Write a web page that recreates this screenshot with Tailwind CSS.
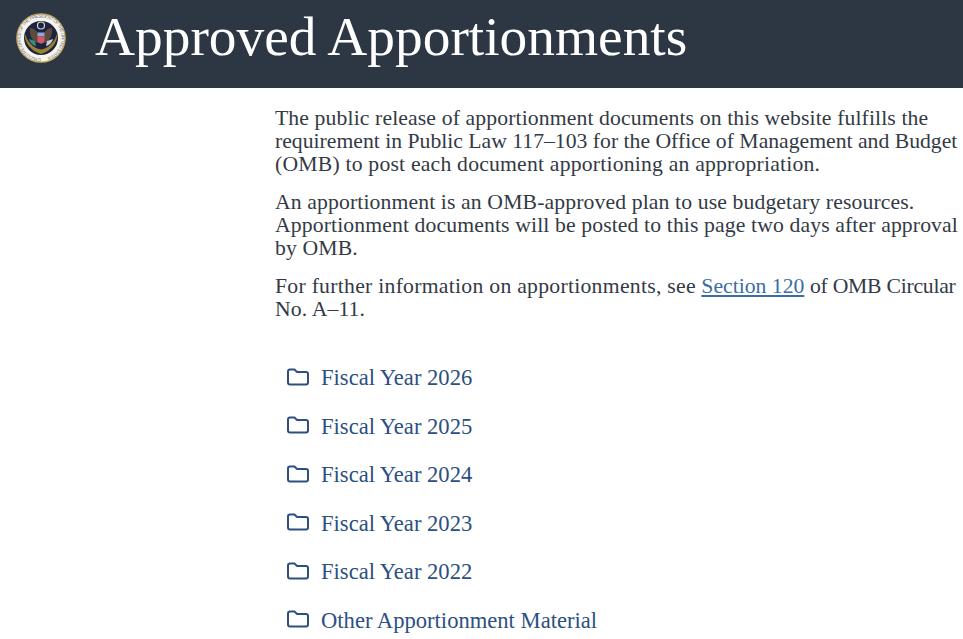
<!DOCTYPE html>
<html lang="en">
<head>
  <meta charset="UTF-8">
  <meta name="viewport" content="width=device-width, initial-scale=1.0">
  <title>Approved Apportionments</title>
  <script src="https://cdn.jsdelivr.net/npm/@tailwindcss/browser@4"></script>
</head>
<body class="bg-white overflow-hidden h-[639px] [font-family:'Liberation_Serif',serif]">
  <header class="bg-[#2d3643] h-[88px] pb-[14px] flex items-center">
    <svg class="ml-[16px] mt-[2px] w-[50px] h-[50px] shrink-0" viewBox="0 0 50 50">
      <circle cx="25" cy="25" r="24.8" fill="#c9ad5a"/>
      <circle cx="25" cy="25" r="23.6" fill="#f6f4ec"/>
      <defs><path id="ring" d="M25 45.500a20.500 20.500 0 1 1 .01 0"/></defs>
      <text font-size="4.600" fill="#6f7280" font-family="Liberation Sans, sans-serif"><textPath href="#ring" textLength="122">EXECUTIVE OFFICE OF THE PRESIDENT OF THE UNITED STATES</textPath></text>
      <circle cx="25" cy="25" r="17" fill="#1b2440"/>
      <path d="M8.500 19c-.5 10 6 19 16.500 22 10.500-3 17-12 16.500-22-2 9-8 16-16.500 17.500C16.500 35 10.500 28 8.500 19z" fill="#9a8230"/>
      <path d="M14 15c4 0 7 3 8 6v9c-5-1-9-7-8-15zM36 15c-4 0-7 3-8 6v9c5-1 9-7 8-15z" fill="#5d4a3c"/>
      <circle cx="25" cy="12.500" r="3.500" fill="none" stroke="#d9d6c4" stroke-width="1.200"/>
      <rect x="21.500" y="19.500" width="7" height="4" fill="#8fa6d8"/>
      <path d="M21.500 23.500h7v4c0 1.800-1.700 2.800-3.500 3.300-1.800-.5-3.500-1.500-3.500-3.300z" fill="#d8566b"/>
      <path d="M13 26l6 2 1 5c-3-.5-6-3-7-7z" fill="#3d8c80"/>
      <path d="M37 26l-6 2-1 5c3-.5 6-3 7-7z" fill="#c9cdd2"/>
    </svg>
    <h1 class="ml-[29px] text-[55.400px] leading-none text-white whitespace-nowrap">Approved Apportionments</h1>
  </header>

  <main class="pl-[275px] pt-[19px] text-[#333a45] text-[21.700px] leading-[23px] tracking-[0.12px] whitespace-nowrap">
    <p>The public release of apportionment documents on this website fulfills the<br>
      <span class="tracking-normal">requirement in Public Law 117–103 for the Office of Management and Budget</span><br>
      <span class="tracking-[0.2px]">(OMB) to post each document apportioning an appropriation.</span></p>
    <p class="mt-[15px]">An apportionment is an OMB-approved plan to use budgetary resources.<br>
      Apportionment documents will be posted to this page two days after approval<br>
      by OMB.</p>
    <p class="mt-[15px]"><span class="tracking-[0.27px]">For further information on apportionments, see</span> <a href="#" class="text-[#3a6ea5] underline tracking-normal">Section 120</a> <span class="tracking-[-0.25px]">of OMB Circular</span><br>
      No. A–11.</p>

    <ul class="mt-[32.600px] text-[#2c5080] text-[22.600px] leading-[25px] tracking-normal">
      <li class="h-[48.500px] flex items-center pl-[12px] gap-[12px]">
        <svg class="w-[22px] h-[18px] -translate-y-px" viewBox="0 0 22 18" fill="none" stroke="#2c5080" stroke-width="2"><path d="M1 3.500c0-1.200.8-2 2-2h4.500l2.500 2.500h9c1.200 0 2 .8 2 2v8.500c0 1.200-.8 2-2 2H3c-1.200 0-2-.8-2-2z"/></svg>
        <span>Fiscal Year 2026</span>
      </li>
      <li class="h-[48.500px] flex items-center pl-[12px] gap-[12px]">
        <svg class="w-[22px] h-[18px] -translate-y-px" viewBox="0 0 22 18" fill="none" stroke="#2c5080" stroke-width="2"><path d="M1 3.500c0-1.200.8-2 2-2h4.500l2.500 2.500h9c1.200 0 2 .8 2 2v8.500c0 1.200-.8 2-2 2H3c-1.200 0-2-.8-2-2z"/></svg>
        <span>Fiscal Year 2025</span>
      </li>
      <li class="h-[48.500px] flex items-center pl-[12px] gap-[12px]">
        <svg class="w-[22px] h-[18px] -translate-y-px" viewBox="0 0 22 18" fill="none" stroke="#2c5080" stroke-width="2"><path d="M1 3.500c0-1.200.8-2 2-2h4.500l2.500 2.500h9c1.200 0 2 .8 2 2v8.500c0 1.200-.8 2-2 2H3c-1.200 0-2-.8-2-2z"/></svg>
        <span>Fiscal Year 2024</span>
      </li>
      <li class="h-[48.500px] flex items-center pl-[12px] gap-[12px]">
        <svg class="w-[22px] h-[18px] -translate-y-px" viewBox="0 0 22 18" fill="none" stroke="#2c5080" stroke-width="2"><path d="M1 3.500c0-1.200.8-2 2-2h4.500l2.500 2.500h9c1.200 0 2 .8 2 2v8.500c0 1.200-.8 2-2 2H3c-1.200 0-2-.8-2-2z"/></svg>
        <span>Fiscal Year 2023</span>
      </li>
      <li class="h-[48.500px] flex items-center pl-[12px] gap-[12px]">
        <svg class="w-[22px] h-[18px] -translate-y-px" viewBox="0 0 22 18" fill="none" stroke="#2c5080" stroke-width="2"><path d="M1 3.500c0-1.200.8-2 2-2h4.500l2.500 2.500h9c1.200 0 2 .8 2 2v8.500c0 1.200-.8 2-2 2H3c-1.200 0-2-.8-2-2z"/></svg>
        <span>Fiscal Year 2022</span>
      </li>
      <li class="h-[48.500px] flex items-center pl-[12px] gap-[12px]">
        <svg class="w-[22px] h-[18px] -translate-y-px" viewBox="0 0 22 18" fill="none" stroke="#2c5080" stroke-width="2"><path d="M1 3.500c0-1.200.8-2 2-2h4.500l2.500 2.500h9c1.200 0 2 .8 2 2v8.500c0 1.200-.8 2-2 2H3c-1.200 0-2-.8-2-2z"/></svg>
        <span>Other Apportionment Material</span>
      </li>
    </ul>
  </main>
</body>
</html>
